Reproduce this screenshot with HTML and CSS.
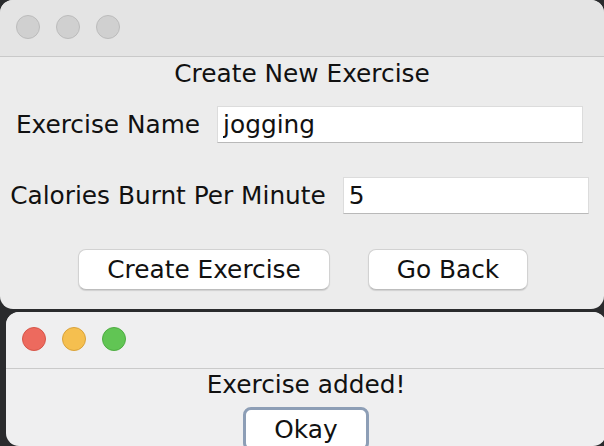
FILE: index.html
```html
<!DOCTYPE html>
<html lang="en">
<head>
  <meta charset="UTF-8" />
  <meta name="viewport" content="width=device-width, initial-scale=1.0" />
  <title>Create New Exercise</title>
  <link rel="stylesheet" href="styles.css">
</head>
<body>
  <div class="window main-window">
    <div class="titlebar">
      <span class="light grey"></span>
      <span class="light grey"></span>
      <span class="light grey"></span>
    </div>

    <div class="content">
      <h2>Create New Exercise</h2>

      <div class="row">
        <label for="exerciseName">Exercise Name</label>
        <input type="text" id="exerciseName" class="name-input" value="jogging" />
      </div>

      <div class="row row-calories">
        <label for="calories">Calories Burnt Per Minute</label>
        <input type="text" id="calories" class="calories-input" value="5" />
      </div>

      <div class="buttons">
        <button class="create-btn">Create Exercise</button>
        <button class="back-btn">Go Back</button>
      </div>
    </div>
  </div>

  <div class="window dialog">
    <div class="titlebar">
      <span class="light red"></span>
      <span class="light yellow"></span>
      <span class="light green"></span>
    </div>

    <div class="content">
      <p class="message">Exercise added!</p>
      <button class="okay-btn">Okay</button>
    </div>
  </div>
</body>
</html>
```

FILE: styles.css
```css
* {
  box-sizing: border-box;
  margin: 0;
  padding: 0;
  font-family: 'DejaVu Sans', 'Noto Sans', sans-serif;
}

body {
  background: #2a2b2d;
  width: 604px;
  height: 446px;
  overflow: hidden;
  color: #111;
}

.window {
  border-radius: 13px;
  overflow: hidden;
}

.main-window {
  width: 604px;
  height: 309px;
  background: #ececec;
}

.titlebar {
  height: 57px;
  display: flex;
  align-items: center;
  gap: 16px;
  padding-left: 16px;
  background: #e4e4e4;
  border-bottom: 1px solid #c9c9c9;
}

.light {
  width: 24px;
  height: 24px;
  border-radius: 50%;
  margin-top: -2px;
}

.grey {
  background: #d0d0d0;
  border: 1px solid #bcbcbc;
}

.red {
  background: #ed6a5e;
  border: 1px solid #d65548;
}

.yellow {
  background: #f5bf4f;
  border: 1px solid #d9a23a;
}

.green {
  background: #61c554;
  border: 1px solid #4ead42;
}

.content {
  display: flex;
  flex-direction: column;
  align-items: center;
}

h2 {
  font-size: 24.8px;
  font-weight: normal;
  line-height: 28px;
  margin-top: 3px;
}

.row {
  display: flex;
  align-items: center;
  gap: 17px;
  margin-top: 18px;
  margin-right: 5px;
}

.row-calories {
  margin-top: 34px;
}

label {
  font-size: 24.8px;
  line-height: 28px;
}

input {
  height: 37px;
  padding: 0 5px;
  font-size: 24.8px;
  color: #111;
  background: #fff;
  border: 1px solid #dcdcdc;
  border-bottom-color: #b9b9b9;
  outline: none;
}

.name-input {
  width: 366px;
}

.calories-input {
  width: 246px;
}

.buttons {
  display: flex;
  gap: 38px;
  margin-top: 35px;
  padding-left: 2px;
}

button {
  height: 41px;
  font-size: 24.8px;
  color: #111;
  background: #fff;
  border: 1px solid #d2d2d2;
  border-bottom-color: #bdbdbd;
  border-radius: 8px;
  box-shadow: 0 1px 1px rgba(0, 0, 0, 0.12);
}

.create-btn {
  width: 252px;
}

.back-btn {
  width: 160px;
}

.dialog {
  width: 600px;
  height: 134px;
  margin-top: 3px;
  margin-left: 6px;
  background: #efeff0;
}

.dialog .titlebar {
  background: #efeff0;
  border-bottom-color: #cacaca;
}

.message {
  font-size: 24.8px;
  line-height: 28px;
  margin-top: 2px;
}

.okay-btn {
  width: 126px;
  height: 44px;
  margin-top: 8px;
  border: 3px solid #8d9eb6;
  box-shadow: none;
}
```
